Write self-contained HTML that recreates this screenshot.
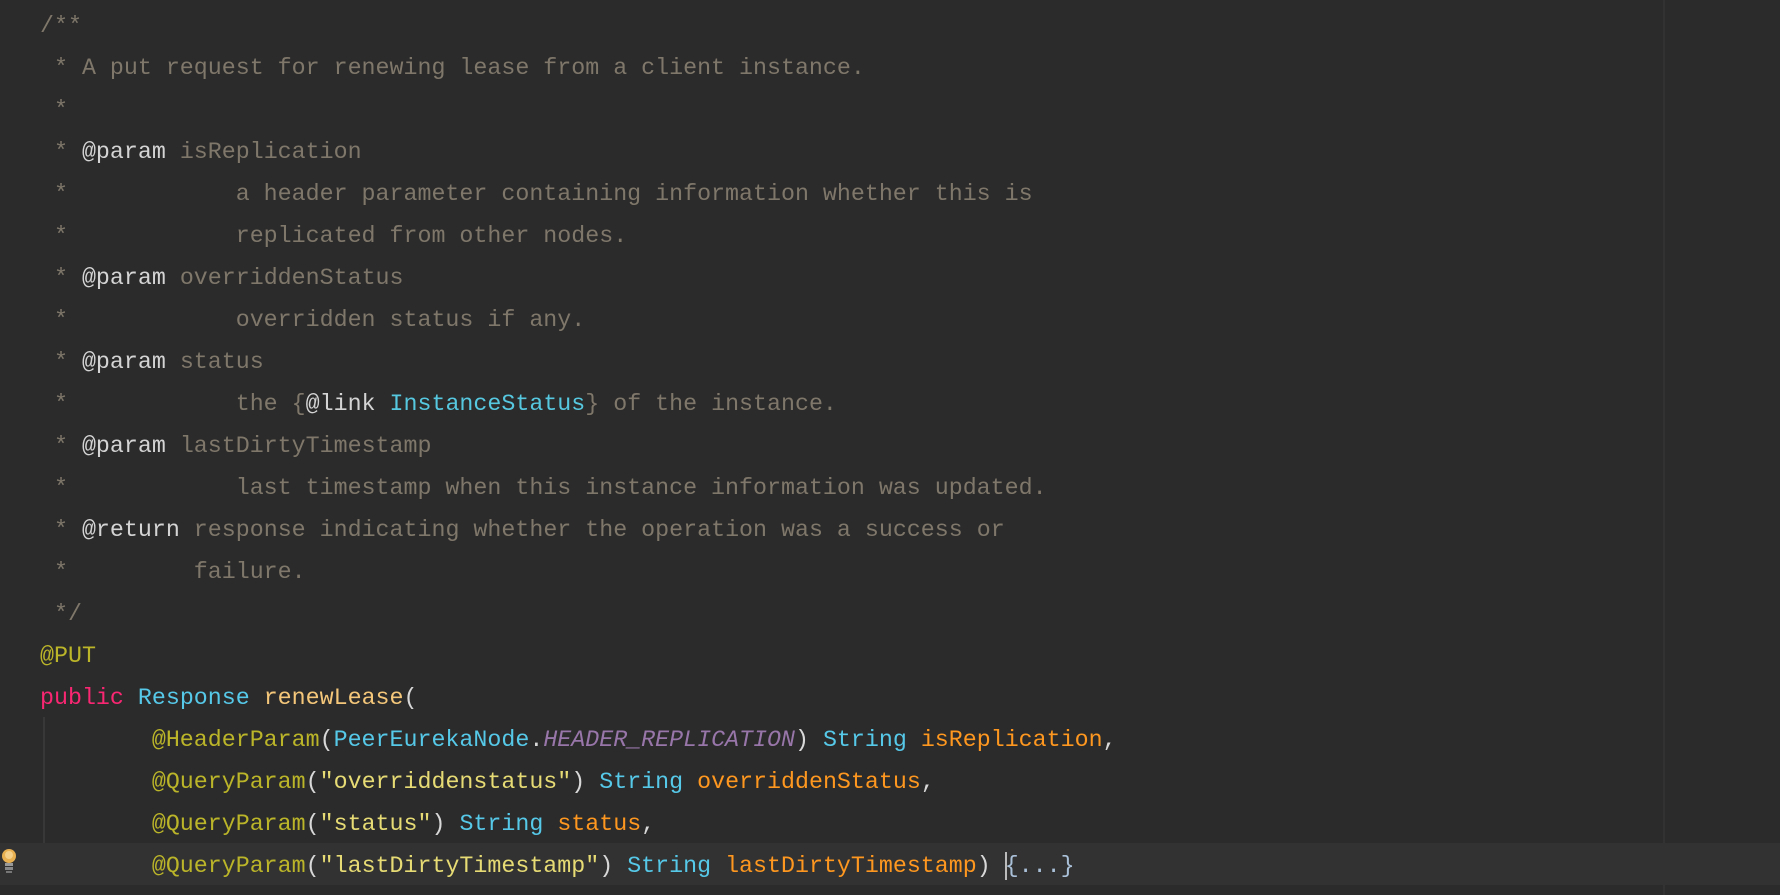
<!DOCTYPE html>
<html><head><meta charset="utf-8"><style>
html,body{margin:0;padding:0;background:#2b2b2b;width:1780px;height:895px;overflow:hidden}
.ed{position:absolute;left:40px;top:5px;font-family:"Liberation Mono","DejaVu Sans Mono",monospace;font-size:23.3px;color:#a9b7c6}
.l{height:42px;line-height:42px;position:relative;white-space:pre}
.c{color:#7f776a}
.t{color:#d4d4d4}
.lk{color:#56c8e0}
.an{color:#bbb529}
.kw{color:#f92672}
.ty{color:#56c8e8}
.fn{color:#f4c77a}
.pm{color:#fd971f}
.st{color:#e6db74}
.pu{color:#d8d8d8}
.it{color:#9876aa;font-style:italic}
.hl{position:absolute;left:0;top:843px;width:1780px;height:42px;background:#323232}
.vr{position:absolute;left:1663px;top:0;width:2px;height:895px;background:#323232}
.gd{position:absolute;left:43px;top:717px;width:2px;height:126px;background:#383838}
.fold{color:#a9c0d8}
.cur{display:inline-block;width:2px;height:28px;background:#bbb;vertical-align:middle;margin-right:-2px}
.bulb{position:absolute;left:1px;top:847px;width:16px;height:28px}
</style></head><body>
<div class="vr"></div>
<div class="hl"></div>
<div class="gd"></div>
<svg class="bulb" viewBox="0 0 16 28"><circle cx="8" cy="9" r="7" fill="#e8b050"/><circle cx="8" cy="8" r="4" fill="#f4d088"/><rect x="4" y="16" width="8" height="3" fill="#999"/><rect x="4" y="20" width="8" height="3" fill="#888"/><rect x="5" y="24" width="6" height="2" fill="#777"/></svg>
<div class="ed"><div class="l c">/**</div><div class="l c"> * A put request for renewing lease from a client instance.</div><div class="l c"> *</div><div class="l c"> * <span class="t">@param</span> isReplication</div><div class="l c"> *            a header parameter containing information whether this is</div><div class="l c"> *            replicated from other nodes.</div><div class="l c"> * <span class="t">@param</span> overriddenStatus</div><div class="l c"> *            overridden status if any.</div><div class="l c"> * <span class="t">@param</span> status</div><div class="l c"> *            the {<span class="t">@link</span> <span class="lk">InstanceStatus</span>} of the instance.</div><div class="l c"> * <span class="t">@param</span> lastDirtyTimestamp</div><div class="l c"> *            last timestamp when this instance information was updated.</div><div class="l c"> * <span class="t">@return</span> response indicating whether the operation was a success or</div><div class="l c"> *         failure.</div><div class="l c"> */</div><div class="l an">@PUT</div><div class="l"><span class="kw">public</span> <span class="ty">Response</span> <span class="fn">renewLease</span><span class="pu">(</span></div><div class="l">        <span class="an">@HeaderParam</span><span class="pu">(</span><span class="ty">PeerEurekaNode</span><span class="pu">.</span><span class="it">HEADER_REPLICATION</span><span class="pu">)</span> <span class="ty">String</span> <span class="pm">isReplication</span><span class="pu">,</span></div><div class="l">        <span class="an">@QueryParam</span><span class="pu">(</span><span class="st">"overriddenstatus"</span><span class="pu">)</span> <span class="ty">String</span> <span class="pm">overriddenStatus</span><span class="pu">,</span></div><div class="l">        <span class="an">@QueryParam</span><span class="pu">(</span><span class="st">"status"</span><span class="pu">)</span> <span class="ty">String</span> <span class="pm">status</span><span class="pu">,</span></div><div class="l">        <span class="an">@QueryParam</span><span class="pu">(</span><span class="st">"lastDirtyTimestamp"</span><span class="pu">)</span> <span class="ty">String</span> <span class="pm">lastDirtyTimestamp</span><span class="pu">)</span> <span class="cur"></span><span class="fold">{...}</span></div></div>
</body></html>
